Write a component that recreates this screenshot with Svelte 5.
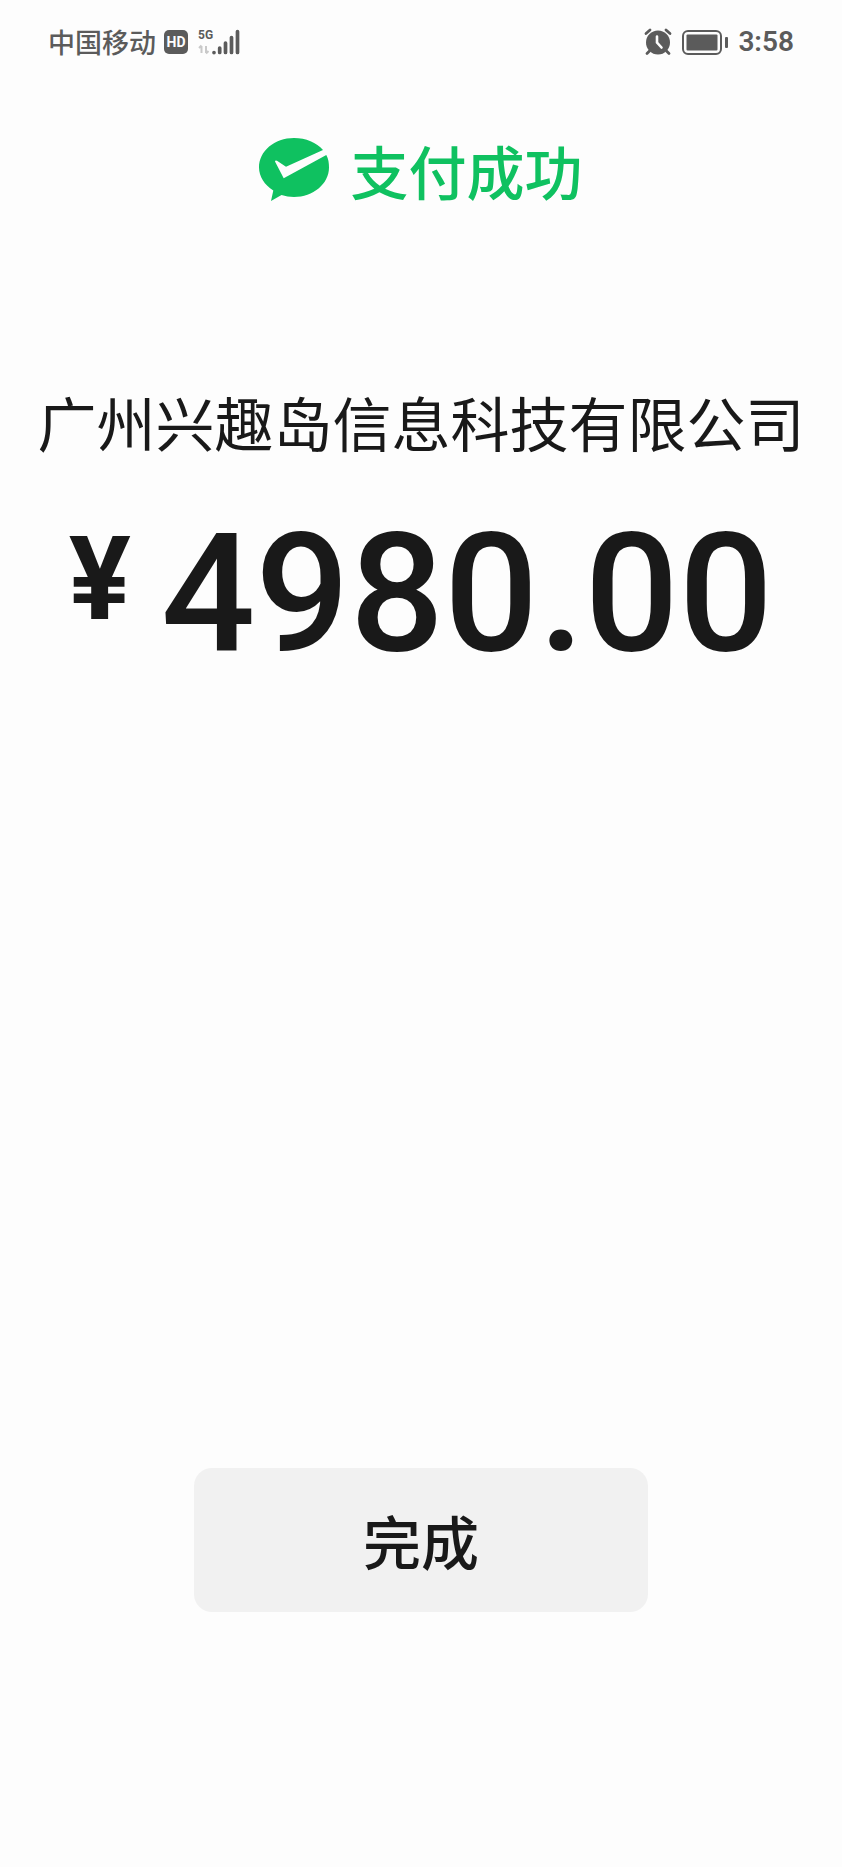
<script>
  const carrier = '中国移动';
  const time = '3:58';
  const payee = '广州兴趣岛信息科技有限公司';
  const amount = '4980.00';
</script>

<div class="screen">
  <header class="status">
    <div class="group">
      <span class="carrier">{carrier}</span>
      <span class="hd">HD</span>
      <svg class="signal" width="42" height="28" viewBox="0 0 42 28" role="img" aria-label="5G">
        <text x="0" y="11" class="net">5G</text>
        <path d="M3.5 25v-7M1 20l2.500-2.500M8 18v7M10.500 23L8 25.500" stroke="#c9c9c9" stroke-width="2" fill="none" />
        <g stroke="#5b5b5b" stroke-width="3.700" stroke-linecap="round">
          <path d="M16 24.500v.1M21.700 20v4.500M27.500 15v9.500M33.500 9.500v15M39.500 3.500v21" />
        </g>
      </svg>
    </div>
    <div class="group right">
      <svg width="28" height="28" viewBox="0 0 28 28" aria-hidden="true">
        <g stroke="#5b5b5b" fill="none" stroke-width="2.800" stroke-linecap="round">
          <path d="M2 5.500L6 2M22 2l4 3.500M5.500 23L3 25.500M22.500 23l2.500 2.500" />
        </g>
        <circle cx="14" cy="14.500" r="12" fill="#5b5b5b" />
        <path d="M13 8.500v6l4.500 5" stroke="#fdfdfd" stroke-width="2.600" fill="none" stroke-linecap="round" />
      </svg>
      <svg width="46" height="25" viewBox="0 0 46 25" aria-hidden="true">
        <rect x="1" y="1" width="38" height="23" rx="5" fill="none" stroke="#5b5b5b" stroke-width="2" />
        <rect x="4.500" y="4.500" width="31" height="16" rx="1" fill="#5b5b5b" />
        <rect x="43" y="7" width="3" height="11" rx="1" fill="#5b5b5b" />
      </svg>
      <span class="time">{time}</span>
    </div>
  </header>

  <main>
    <h1 class="result">
      <svg width="70" height="64" viewBox="0 0 70 64" aria-hidden="true">
        <path fill="#0fc160" d="M64 12C57.500 4.500 47 0 35 0C15.500 0 0 13 0 29.500C0 38.500 5.500 47 14.300 52.500L12 63L22.500 57C26.500 58.300 30.500 59 35 59C54 59 70 46 70 29.500C70 25 69.500 21 67.300 17L24.700 40.300L16 23.500Q16.200 21.800 18 22.700L27 28.700Z" />
      </svg>
      <span>支付成功</span>
    </h1>
    <p class="payee">{payee}</p>
    <p class="amount"><span class="yen">¥</span><span class="value">{amount}</span></p>
  </main>

  <footer>
    <button type="button">完成</button>
  </footer>
</div>

<style>
  :global(body) {
    margin: 0;
    background: #fdfdfd;
  }
  .screen {
    box-sizing: border-box;
    min-height: 100vh;
    display: flex;
    flex-direction: column;
    font-family: "Noto Sans CJK SC", sans-serif;
    color: #191919;
    background: #fdfdfd;
  }
  h1, p {
    margin: 0;
    font-weight: 400;
  }
  .status {
    display: flex;
    justify-content: space-between;
    padding: 24px 48px 0;
    color: #5b5b5b;
  }
  .group {
    display: flex;
    align-items: center;
    height: 36px;
    gap: 8px;
  }
  .right {
    gap: 10px;
  }
  .carrier {
    font-size: 27px;
    line-height: 36px;
    font-weight: 500;
  }
  .hd {
    width: 24px;
    height: 24px;
    border-radius: 5px;
    background: #5b5b5b;
    color: #fdfdfd;
    font: 700 14px/24px Roboto, sans-serif;
    text-align: center;
  }
  .signal {
    margin-left: 2px;
    overflow: visible;
  }
  .net {
    font: 700 12px Roboto, sans-serif;
    fill: #5b5b5b;
  }
  .time {
    font: 600 28px/36px Roboto, sans-serif;
  }
  main {
    display: flex;
    flex-direction: column;
    align-items: center;
  }
  .result {
    display: flex;
    align-items: center;
    gap: 21px;
    margin-top: 67px;
    color: #0fc160;
    font-size: 58px;
    line-height: 86px;
    font-weight: 500;
  }
  .payee {
    margin-top: 165px;
    font-size: 59px;
    line-height: 88px;
    white-space: nowrap;
  }
  .amount {
    display: flex;
    align-items: flex-start;
    gap: 30px;
    margin-top: 45px;
    font-family: Roboto, sans-serif;
  }
  .yen {
    font-size: 116px;
    line-height: 136px;
    font-weight: 700;
  }
  .value {
    font-size: 166px;
    line-height: 166px;
    font-weight: 500;
  }
  footer {
    display: flex;
    justify-content: center;
    margin-top: auto;
    padding-bottom: 255px;
  }
  button {
    width: 54%;
    height: 144px;
    border: 0;
    border-radius: 18px;
    background: #f1f1f1;
    color: #191919;
    font: 500 58px/86px "Noto Sans CJK SC", sans-serif;
  }
</style>
